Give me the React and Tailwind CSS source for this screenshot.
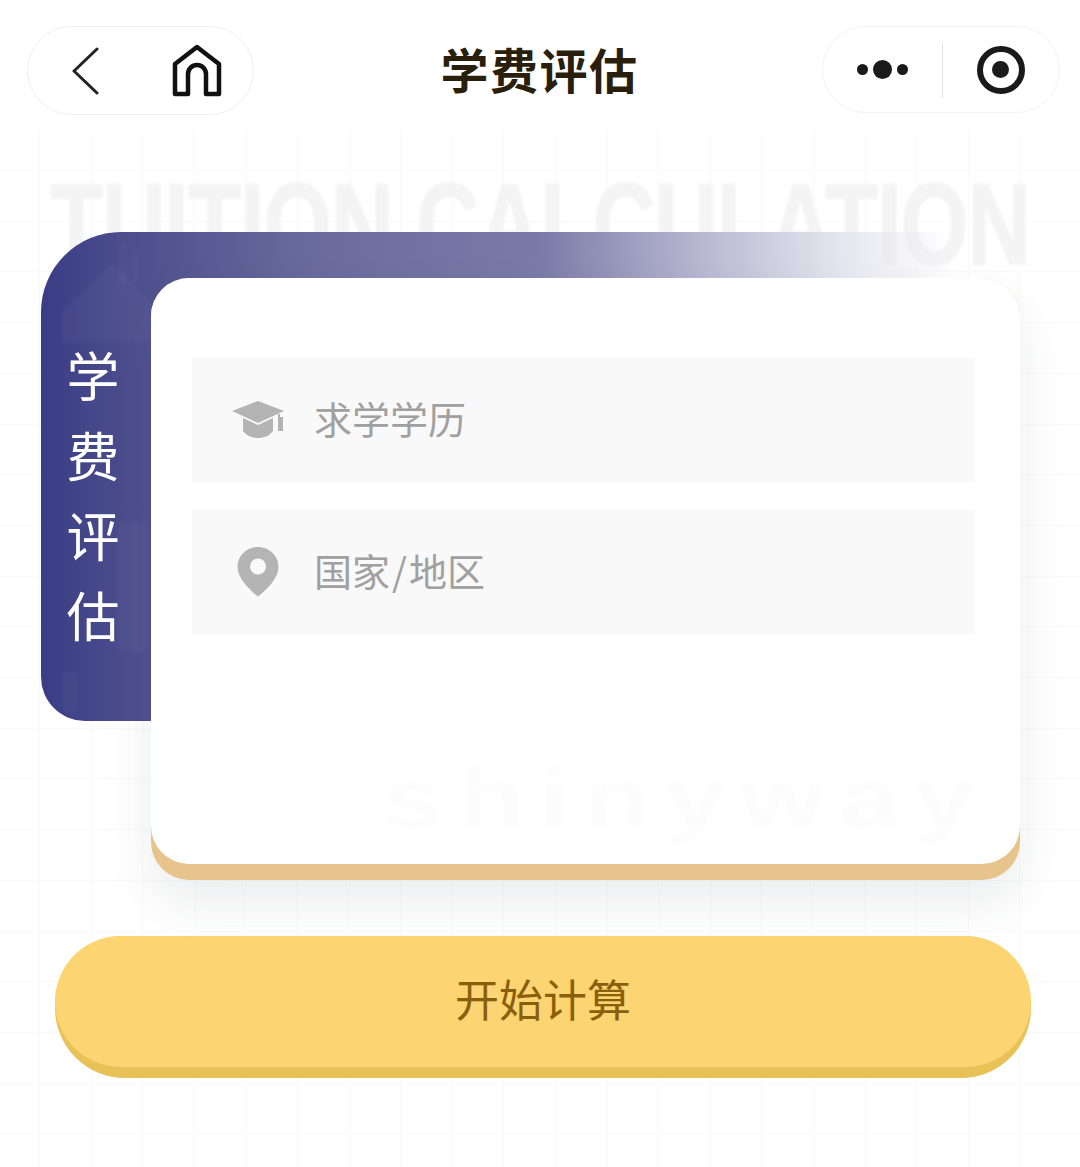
const gridCols = Array.from({ length: 20 }, (_, i) => Math.round(39 + i * 51.6));
const gridRows = Array.from({ length: 20 }, (_, i) => Math.round(170 + i * 50.7));

const BackIcon = () => (
  <svg width="27" height="48" viewBox="0 0 27 48" fill="none" stroke="#222" strokeWidth="3" strokeLinecap="round" strokeLinejoin="round">
    <path d="M25 2 2 24l23 22" />
  </svg>
);

const HomeIcon = () => (
  <svg width="50" height="54" viewBox="0 0 50 54" fill="none" stroke="#111" strokeWidth="4.5" strokeLinejoin="round">
    <path d="M3 50V20L25 3l22 17v30H34V30a9 9 0 0 0-18 0v20Z" />
  </svg>
);

const CapIcon = () => (
  <svg width="53" height="38" viewBox="0 0 53 38" fill="#b4b4b4">
    <path d="M26 0 52 10 26 22 0 10Z" />
    <path d="M11 17 26 24l15-7v13c-4 5-9 7-15 7s-11-2-15-7Z" />
    <path d="M46 13h2v3h3v14h-5Z" />
  </svg>
);

const PinIcon = () => (
  <svg width="42" height="50" viewBox="0 0 42 50">
    <path fill="#b4b4b4" fillRule="evenodd" d="M21 0C9.5 0 0.5 9 0.5 20 0.5 32 14 44 21 49.5 28 44 41.5 32 41.5 20 41.5 9 32.5 0 21 0Zm0 11.5a8 8 0 1 1 0 16 8 8 0 0 1 0-16Z" />
  </svg>
);

// washed out campus building behind the side label
const BuildingTexture = () => (
  <svg width="110" height="489" viewBox="0 0 110 489" fill="#fff" fillOpacity="0.03" className="blur-[2px]">
    <path d="M78 12h8v40h-8ZM92 20h6v30h-6Z" />
    <path d="M20 80 72 30l38 40v40H20Z" />
    <path d="M76 290h30v130H76Z" />
    <path d="M22 440h14v40H22Z" />
  </svg>
);

const Field = ({ icon, children }) => (
  <div className="flex h-[124px] items-center bg-[#f9f9f9]">
    <div className="flex w-[122px] shrink-0 items-center justify-center pl-[10px]">{icon}</div>
    <span className="mb-[6px] text-[38px] text-[#a0a0a0]">{children}</span>
  </div>
);

export default function App() {
  return (
    <div className="relative h-[1167px] w-[1080px] overflow-hidden bg-white font-['Noto_Sans_CJK_SC','Liberation_Sans',sans-serif]">
      {/* faint squared paper behind everything */}
      <div className="absolute inset-x-0 bottom-0 top-[130px]">
        {gridCols.map(x => (
          <div key={x} className="absolute inset-y-0 w-px bg-[#f9f9f9]" style={{ left: x }} />
        ))}
        {gridRows.map(y => (
          <div key={y} className="absolute inset-x-0 h-px bg-[#f9f9f9]" style={{ top: y - 130 }} />
        ))}
      </div>

      <div className="absolute left-[50px] top-[166px] origin-top-left scale-x-[1.316] scale-y-[1.75] whitespace-nowrap text-[66px] font-bold leading-none tracking-[-0.5px] text-[#f4f4f5] blur-[1px] [-webkit-text-stroke:1px_#f4f4f5] [font-family:'Liberation_Sans_Narrow','Liberation_Sans',sans-serif]">
        TUITION CALCULATION
      </div>

      <div className="relative">
        <header className="flex h-[232px] items-start justify-between pl-[27px] pr-[20px] pt-[26px]">
          <div className="flex h-[89px] w-[227px] items-center rounded-full border border-[#efefef] bg-white pl-[44px]">
            <BackIcon />
            <div className="ml-[73px]">
              <HomeIcon />
            </div>
          </div>
          <h1 className="ml-[3px] mt-[12px] text-[48px] font-bold leading-[60px] tracking-[1.5px] text-[#2a1f0c]">学费评估</h1>
          <div className="flex h-[87px] w-[238px] items-center rounded-full border border-[#f3f3f3] bg-white">
            <div className="flex w-[119px] items-center justify-center gap-[5px]">
              <span className="h-[11px] w-[11px] rounded-full bg-[#1a1a1a]" />
              <span className="h-[19px] w-[19px] rounded-full bg-[#1a1a1a]" />
              <span className="h-[11px] w-[11px] rounded-full bg-[#1a1a1a]" />
            </div>
            <div className="h-[56px] w-px bg-[#e4e4e4]" />
            <div className="flex flex-1 items-center justify-center">
              <div className="flex h-[48px] w-[48px] items-center justify-center rounded-full border-[6px] border-[#1a1a1a]">
                <span className="h-[17px] w-[17px] rounded-full bg-[#1a1a1a]" />
              </div>
            </div>
          </div>
        </header>

        <section className="pl-[41px]">
          <div className="relative h-[489px] w-[910px] overflow-hidden rounded-bl-[44px] rounded-tl-[80px] bg-[linear-gradient(90deg,#3a3d85_0%,#50528f_12%,#6a6b9d_30%,#7b7ba9_55%,#b6b6d0_72%,#e6e6ef_88%,#ffffff00_100%)]">
            <div className="absolute left-0 top-0">
              <BuildingTexture />
            </div>
            <div className="relative flex w-[110px] flex-col items-center gap-[27px] pr-[6px] pt-[116px] text-[53px] leading-[53px] text-white">
              <span>学</span>
              <span>费</span>
              <span>评</span>
              <span>估</span>
            </div>
          </div>

          <div className="relative ml-[110px] -mt-[443px] h-[602px] w-[869px] rounded-[38px] bg-[#e6c48b] shadow-[0_24px_50px_rgba(40,50,70,0.09)]">
            <div className="relative h-[586px] overflow-hidden rounded-[38px] bg-white px-[41px] pt-[80px]">
              <div className="absolute left-[232px] top-[478px] origin-top-left scale-x-[1.3] whitespace-nowrap text-[84px] font-bold leading-none tracking-[11px] text-[#fcfcfc] blur-[1px] [font-family:'Liberation_Sans',sans-serif]">
                shinyway
              </div>
              <div className="relative flex w-[783px] flex-col gap-[28px]">
                <Field icon={<CapIcon />}>求学学历</Field>
                <Field icon={<PinIcon />}>
                  国家<span className="mx-[2px]">/</span>地区
                </Field>
              </div>
            </div>
          </div>
        </section>

        <div className="ml-[55px] mt-[56px] h-[142px] w-[976px] rounded-[70px] bg-[#e8c257]">
          <button className="flex h-[131px] w-full items-center justify-center rounded-[66px] bg-[#fcd471] pb-[7px] text-[44px] text-[#8a5f0c]">
            开始计算
          </button>
        </div>
      </div>
    </div>
  );
}
